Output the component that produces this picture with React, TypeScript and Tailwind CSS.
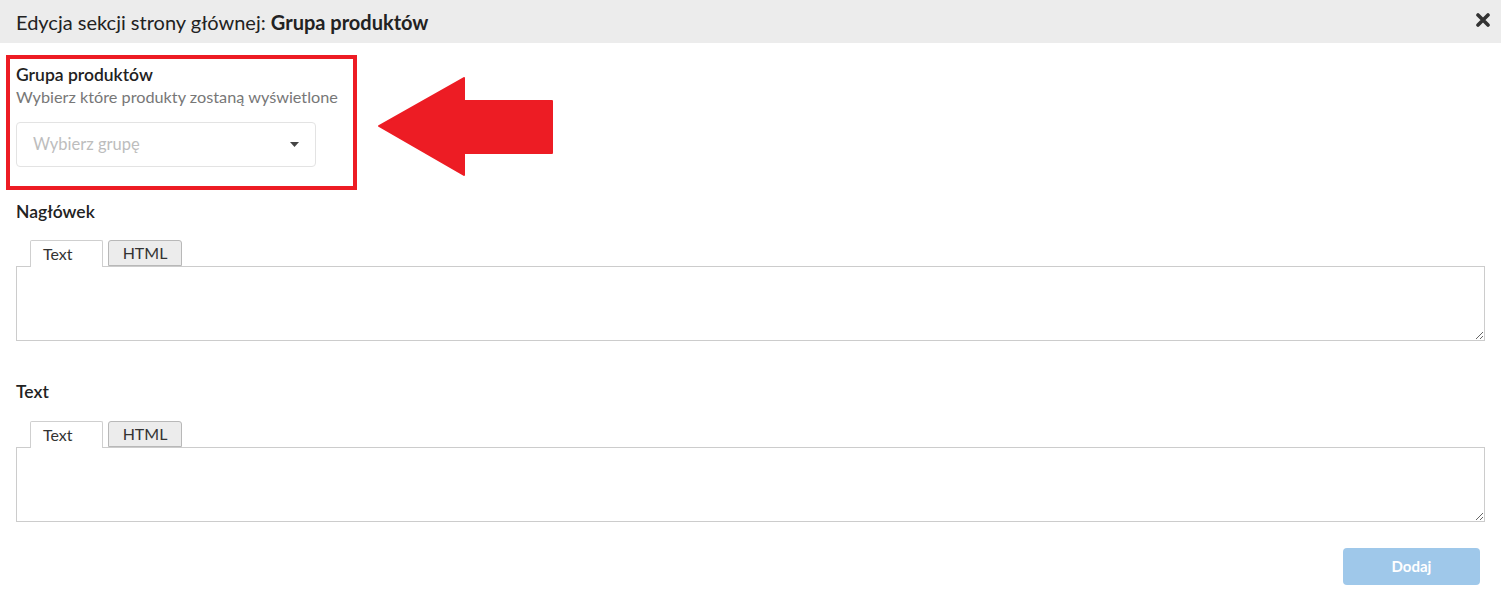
import React from "react";

const TabbedEditor: React.FC = () => {
  return (
    <div className="mt-[16px]">
      <div className="flex items-end pl-[14px] gap-[5px]">
        <div className="h-[27px] w-[73px] border border-b-0 border-[#cfcfcf] bg-white rounded-t-[2px] text-[16px] text-[#333] flex items-center pl-[12px] -mb-px relative z-10">
          Text
        </div>
        <div className="h-[26px] w-[74px] border border-[#b8b8b8] bg-[#ececec] rounded-t-[3px] text-[16px] text-[#333] flex items-center justify-center">
          HTML
        </div>
      </div>
      <textarea className="block w-full h-[75px] border border-[#cccccc] bg-white resize-y outline-none" />
    </div>
  );
};

const App: React.FC = () => {
  return (
    <div className="w-[1501px] h-[597px] bg-white font-['Lato','Open_Sans',sans-serif] text-[#222]">
      <div className="h-[43px] bg-[#ececec] flex items-center justify-between pl-4 pr-[11px]">
        <h1 className="text-[20px] text-[#222]">
          Edycja sekcji strony głównej: <span className="font-bold">Grupa produktów</span>
        </h1>
        <svg width="14" height="14" viewBox="0 0 14 14" className="mt-[-3px]">
          <path d="M2 2 L12 12 M12 2 L2 12" stroke="#333" strokeWidth="3.6" strokeLinecap="round" />
        </svg>
      </div>

      <div className="flex items-start mt-3 ml-[6px]">
        <div className="w-[351px] h-[135px] border-4 border-[#ed1c24] pl-[6px] pt-[5px]">
          <div className="text-[17.5px] font-semibold text-[#222] leading-[22px]">Grupa produktów</div>
          <div className="text-[16.25px] text-[#777] leading-[20px] mt-[1px]">Wybierz które produkty zostaną wyświetlone</div>
          <div className="mt-[15px] w-[300px] h-[45px] border border-[#e3e3e3] rounded-[4px] flex items-center justify-between pl-4 pr-[16px]">
            <span className="text-[16.5px] text-[#bdbdbd]">Wybierz grupę</span>
            <svg width="9" height="5" viewBox="0 0 9 5">
              <path d="M0 0 L9 0 L4.5 5 Z" fill="#444" />
            </svg>
          </div>
        </div>
        <svg width="176" height="100" viewBox="0 0 176 100" className="ml-[21px] mt-[22px]">
          <path d="M1 49 L86 1 L86 24 L174 24 L174 76 L86 76 L86 98 Z" fill="#ed1c24" strokeLinejoin="round" stroke="#ed1c24" strokeWidth="2" />
        </svg>
      </div>

      <div className="px-4">
        <div className="mt-[10px] text-[17.5px] font-semibold leading-[24px]">Nagłówek</div>
        <TabbedEditor />

        <div className="mt-[39px] text-[17.5px] font-semibold leading-[24px]">Text</div>
        <div className="pt-[1px]">
          <TabbedEditor />
        </div>

        <div className="flex justify-end mt-[26px] pr-[5px]">
          <button className="w-[137px] h-[37px] rounded-[4px] bg-[#9fc8ea] text-white font-bold text-[15px]">
            Dodaj
          </button>
        </div>
      </div>
    </div>
  );
};

export default App;
